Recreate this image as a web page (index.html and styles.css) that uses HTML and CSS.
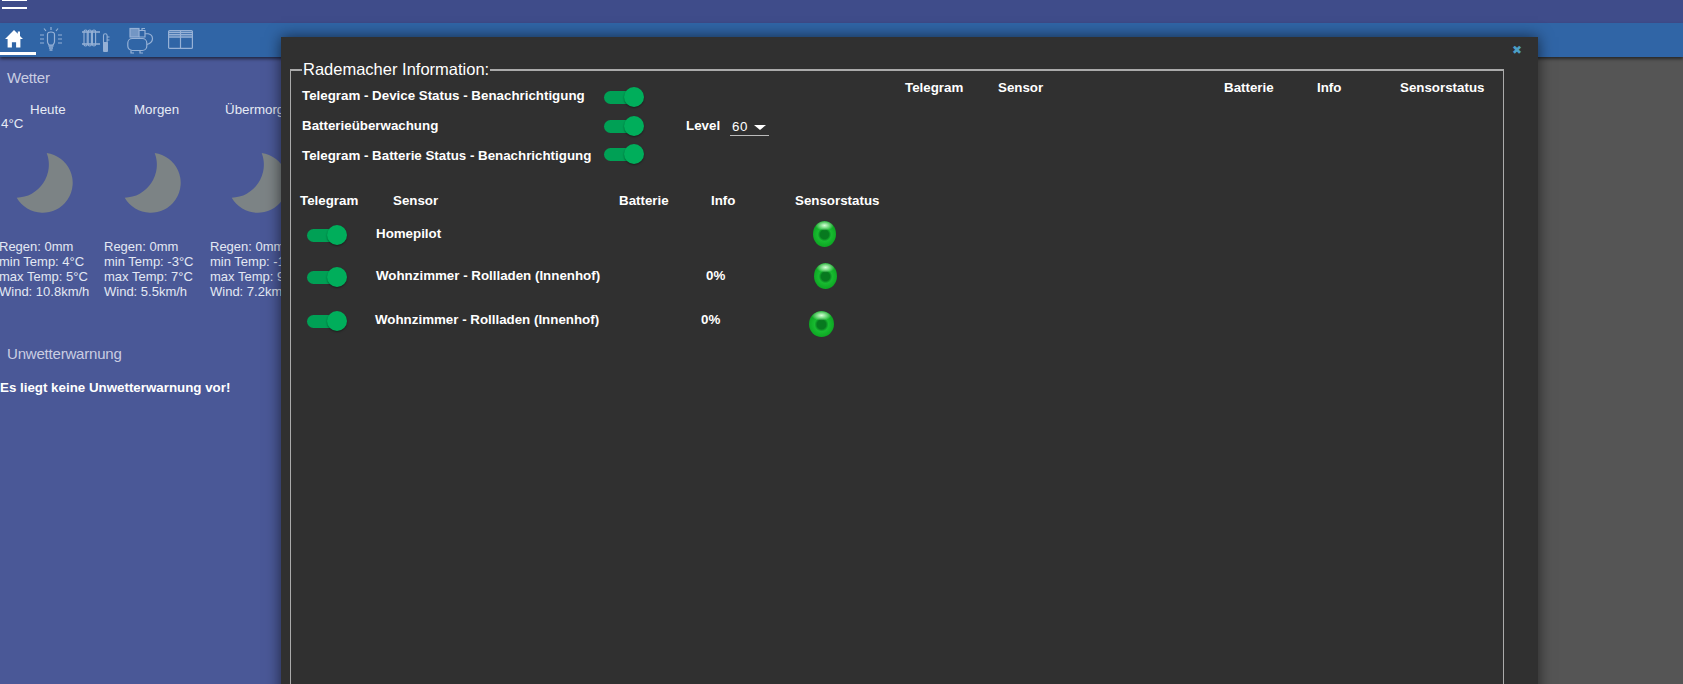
FILE: index.html
```html
<!DOCTYPE html>
<html lang="de">
<head>
<meta charset="utf-8">
<title>Rademacher Information</title>
<link rel="stylesheet" href="styles.css">
</head>
<body>
<header class="topbar">
  <div class="burger"><span></span><span></span></div>
</header>
<nav class="tabs">
  <a class="tab tab-home">
    <svg width="18" height="18" viewBox="0 0 18 18"><path d="M9 0 0 9h2.600v8.600h4.300v-5.400h4.200v5.400h4.300V9H18l-3-3V1.400h-2.200v2.400z" fill="#fff"/></svg>
  </a>
  <a class="tab tab-bulb">
    <svg class="soft" width="24" height="26" viewBox="0 0 24 26" fill="none" stroke="#a8bfdf" stroke-width="1.200"><path d="M8.500 7.500C8.500 5.500 10 5 12 5s3.500.5 3.500 2.500v7c0 2-1 2.500-1.500 3.500h-4c-.5-1-1.500-1.500-1.500-3.500z"/><path d="M9.500 19h5M10 21h4M10.500 23h3" stroke-width="1.500"/><path d="M12 0v3M5 1.500l2 2.500M19 1.500l-2 2.500M1 8h4M19 8h4M1 12h4M19 12h4M1 16h4M19 16h4"/></svg>
  </a>
  <a class="tab tab-heat">
    <svg class="soft" width="28" height="24" viewBox="0 0 28 24" fill="none" stroke="#a8bfdf" stroke-width="1.100"><path d="M0 3h18M0 15h18" stroke-width="1.300"/><rect x="2" y="1" width="3.200" height="16" rx="1.600"/><rect x="6.200" y="1" width="3.200" height="16" rx="1.600"/><rect x="10.400" y="1" width="3.200" height="16" rx="1.600"/><path d="M21.500 14V6.500a1.800 1.800 0 0 1 3.600 0V14"/><path d="M25 8h2.500M25 11h2.500"/><rect x="21" y="13" width="5" height="10" rx="1" fill="#a8bfdf" stroke="none"/></svg>
  </a>
  <a class="tab tab-pump">
    <svg class="soft" width="27" height="27" viewBox="0 0 27 27" fill="none" stroke="#a8bfdf" stroke-width="1.200"><rect x=".8" y="11.500" width="19" height="12" rx="4.500"/><path d="M4 23.500v2.500h3M13 23.500v2.500h3"/><rect x="3" y="1.500" width="9" height="8.500" fill="#7f9fca"/><path d="M12 3.500h6v6.500h-6M15 3.500V1.500h3M18 6.500c5 0 7.500 1.500 7.500 5 0 3-2 5-5.500 6"/></svg>
  </a>
  <a class="tab tab-blind">
    <svg class="soft" width="25" height="19" viewBox="0 0 25 19" fill="none" stroke="#a8bfdf" stroke-width="1.200"><rect x=".6" y=".6" width="23.800" height="17.800" rx="1"/><path d="M.6 2.500h23.800M.6 4.800h23.800M.6 7h23.800" stroke-width="1.500"/><path d="M12.500 1v17.400"/></svg>
  </a>
</nav>
<div class="workspace">
  <main class="panel">
    <h2 class="panel-title">Wetter</h2>
    <div class="forecast">
      <section class="day">
        <div class="day-name day-name-today">Heute</div>
        <div class="now">4°C</div>
        <svg class="moon" width="58" height="62" viewBox="0 0 58 62"><path d="M30.700 1A30 30 0 1 1 .7 45.700 33 33 0 0 0 30.700 1z"/></svg>
        <p class="facts">Regen: 0mm<br>min Temp: 4°C<br>max Temp: 5°C<br>Wind: 10.8km/h</p>
      </section>
      <section class="day day-wide">
        <div class="day-name day-name-next">Morgen</div>
        <div class="now">&nbsp;</div>
        <svg class="moon" width="58" height="62" viewBox="0 0 58 62"><path d="M30.700 1A30 30 0 1 1 .7 45.700 33 33 0 0 0 30.700 1z"/></svg>
        <p class="facts">Regen: 0mm<br>min Temp: -3°C<br>max Temp: 7°C<br>Wind: 5.5km/h</p>
      </section>
      <section class="day">
        <div class="day-name day-name-after">Übermorgen</div>
        <div class="now">&nbsp;</div>
        <svg class="moon" width="58" height="62" viewBox="0 0 58 62"><path d="M30.700 1A30 30 0 1 1 .7 45.700 33 33 0 0 0 30.700 1z"/></svg>
        <p class="facts">Regen: 0mm<br>min Temp: -1°C<br>max Temp: 9°C<br>Wind: 7.2km/h</p>
      </section>
    </div>
    <h2 class="panel-title panel-title-warn">Unwetterwarnung</h2>
    <p class="warning">Es liegt keine Unwetterwarnung vor!</p>
  </main>
</div>

<div class="modal">
  <button class="close">✖</button>
  <fieldset class="box">
    <legend>Rademacher Information:</legend>
    <div class="columns">
      <div class="col-left">
        <div class="setting setting-one"><span class="setting-label">Telegram - Device Status - Benachrichtigung</span><span class="switch"></span></div>
        <div class="setting setting-two"><span class="setting-label">Batterieüberwachung</span><span class="switch"></span><span class="level">Level</span><span class="select">60<i class="caret"></i></span></div>
        <div class="setting setting-three"><span class="setting-label">Telegram - Batterie Status - Benachrichtigung</span><span class="switch"></span></div>
        <div class="thead">
          <span>Telegram</span><span>Sensor</span><span>Batterie</span><span>Info</span><span>Sensorstatus</span>
        </div>
        <div class="sensor sensor-one">
          <span class="cell-switch"><span class="switch"></span></span><span class="name">Homepilot</span><span class="info"></span><span class="cell-led"><i class="led"></i></span>
        </div>
        <div class="sensor sensor-two">
          <span class="cell-switch"><span class="switch"></span></span><span class="name">Wohnzimmer - Rollladen (Innenhof)</span><span class="info">0%</span><span class="cell-led cell-led-two"><i class="led"></i></span>
        </div>
        <div class="sensor sensor-three">
          <span class="cell-switch"><span class="switch"></span></span><span class="name name-shift">Wohnzimmer - Rollladen (Innenhof)</span><span class="info info-shift">0%</span><span class="cell-led cell-led-three"><i class="led led-big"></i></span>
        </div>
      </div>
      <div class="col-right">
        <div class="thead thead-right">
          <span>Telegram</span><span>Sensor</span><span>Batterie</span><span>Info</span><span>Sensorstatus</span>
        </div>
      </div>
    </div>
  </fieldset>
</div>
</body>
</html>
```

FILE: styles.css
```css
* { box-sizing: border-box; }
html, body { margin: 0; height: 684px; overflow: hidden; }
body {
  background: #555;
  color: #fff;
  font-family: "Liberation Sans", Arial, sans-serif;
  font-size: 13.33px;
  display: flex;
  flex-direction: column;
}

.topbar { flex: 0 0 23px; background: #3f4c8a; padding: 0 0 0 2px; }
.burger { width: 25px; display: flex; flex-direction: column; gap: 6px; }
.burger span { display: block; height: 2px; background: #fff; }
.burger span:first-child { height: 1px; }

.tabs {
  flex: 0 0 33px;
  background: #3065a6;
  display: flex;
  box-shadow: 0 2px 3px rgba(0, 0, 0, .55);
  position: relative;
  z-index: 1;
}
.tab { display: block; }
.soft { opacity: .85; }
.tab-home { width: 36px; height: 32px; padding: 7px 0 0 5px; border-bottom: 3px solid #fff; }
.tab-bulb { margin-left: 3px; padding-top: 4px; }
.tab-heat { margin-left: 19px; padding-top: 6px; }
.tab-pump { margin-left: 17px; padding-top: 4px; }
.tab-blind { margin-left: 14px; padding-top: 7px; }

.workspace { flex: 1; display: flex; min-height: 0; }
.panel { width: 900px; background: #4a5897; padding-top: 12px; }
.panel-title {
  margin: 0;
  padding-left: 7px;
  font-size: 15px;
  line-height: 17px;
  font-weight: normal;
  color: #c9cde2;
  letter-spacing: -.2px;
}
.panel-title-warn { margin-top: 46px; }

.forecast { display: flex; margin: 16px 0 0 -1px; }
.day { flex: 0 0 105px; }
.day-wide { flex-basis: 106px; }
.day-name, .now { line-height: 16px; color: #e6ebf5; white-space: nowrap; }
.day-name-today { padding-left: 31px; }
.day-name-next { padding-left: 30px; }
.day-name-after { padding-left: 15px; }
.now { padding-left: 2px; margin-top: -2px; }
.moon { display: block; margin: 20px 0 0 17px; }
.moon path { fill: #7c8385; }
.day-wide .moon { margin-left: 20px; }
.day:nth-child(3) .moon { margin-left: 21px; }
.facts { margin: 25px 0 0; font-size: 13px; line-height: 15px; color: #e3e8f3; white-space: nowrap; }

.warning { margin: 18px 0 0; font-weight: bold; color: #fff; line-height: 16px; }

.modal {
  position: absolute;
  left: 281px;
  top: 37px;
  width: 1257px;
  height: 720px;
  background: #303030;
  box-shadow: 0 0 14px rgba(0, 0, 0, .6);
  z-index: 2;
  padding: 23px 0 0 9px;
}
.close {
  position: absolute;
  top: 6px;
  right: 16px;
  padding: 0;
  border: 0;
  background: none;
  color: #4b9fc6;
  font-size: 12px;
  line-height: 14px;
  font-family: "DejaVu Sans", sans-serif;
}
.box {
  margin: 0;
  width: 1214px;
  height: 680px;
  border: 1px solid #aaa;
  border-top-width: 2px;
  padding: 0;
  min-inline-size: 0;
}
.box legend {
  margin-left: 11px;
  padding: 0 1px 2px;
  font-size: 16.500px;
  line-height: 18px;
  color: #fff;
}

.columns { display: flex; font-weight: bold; }
.col-left { flex: 0 0 614px; padding: 3px 0 0 10px; }
.col-right { flex: 1; padding-top: 0; }

.setting { display: flex; align-items: center; height: 28px; padding-left: 1px; }
.setting-label { flex: 0 0 302px; white-space: nowrap; }
.setting-one .setting-label { margin-bottom: 4px; }
.setting-three .setting-label { margin-top: 2px; }
.setting-two { height: 29px; }
.switch {
  display: inline-block;
  position: relative;
  width: 40px;
  height: 20px;
}
.switch::before {
  content: "";
  position: absolute;
  left: 0;
  top: 4px;
  width: 34px;
  height: 13px;
  border-radius: 7px;
  background: #00a055;
}
.switch::after {
  content: "";
  position: absolute;
  right: 0;
  top: 0;
  width: 20px;
  height: 20px;
  border-radius: 50%;
  background: #00ae5b;
  box-shadow: 0 1px 2px rgba(0, 0, 0, .4);
}
.level { margin-left: 42px; }
.select {
  margin-left: 10px;
  width: 39px;
  height: 18px;
  padding-left: 2px;
  font-weight: normal;
  letter-spacing: .6px;
  line-height: 18px;
  border-bottom: 1px solid #bbb;
  position: relative;
  top: 1px;
}
.caret {
  position: absolute;
  left: 24px;
  top: 7px;
  width: 0;
  height: 0;
  border: 6px solid transparent;
  border-top: 5px solid #fff;
  border-bottom: 0;
}

.thead {
  display: grid;
  grid-template-columns: 93px 226px 92px 84px auto;
  justify-content: start;
  line-height: 16px;
  margin: 25px 0 0 -1px;
  white-space: nowrap;
}
.thead-right { margin: 0; grid-template-columns: 93px 226px 93px 83px auto; }

.sensor {
  display: grid;
  grid-template-columns: 75px 307px 130px auto;
  justify-content: start;
  align-items: center;
  white-space: nowrap;
}
.sensor-one { height: 42px; margin-top: 6px; }
.sensor-two { height: 43px; }
.sensor-three { height: 44px; }
.cell-switch { padding-left: 6px; }
.name, .info { margin-bottom: 6px; }
.name-shift { margin-left: -1px; }
.info { padding-left: 23px; }
.info-shift { padding-left: 18px; }
.cell-led { margin-bottom: 4px; }
.cell-led-two { padding-left: 1px; margin-bottom: 6px; }
.cell-led-three { margin-left: -4px; margin-bottom: 2px; padding-top: 5px; }
.led {
  display: block;
  width: 23px;
  height: 26px;
  border-radius: 50%;
  background:
    radial-gradient(ellipse 40% 20% at 50% 17%, rgba(215, 255, 215, 1), rgba(215, 255, 215, 0) 100%),
    radial-gradient(circle at 50% 52%, #07791f 0, #07791f 24%, #18bb30 38%, #0ca522 70%, #036c10 100%);
}
.led-big { width: 25px; }
```
